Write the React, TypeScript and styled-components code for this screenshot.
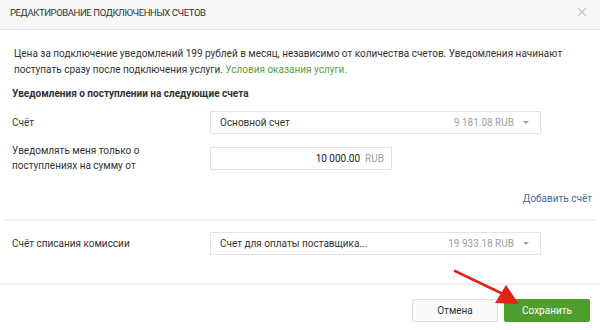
import styled, { createGlobalStyle } from 'styled-components';

const GlobalStyle = createGlobalStyle`
  html, body {
    margin: 0;
    padding: 0;
    background: #ffffff;
  }

  body {
    font-family: Roboto, 'Liberation Sans', Arial, sans-serif;
    font-size: 10px;
    color: #333333;
  }
`;

function Arrow() {
  return (
    <StyledArrow width='80' height='45' viewBox='0 0 80 45'>
      <line x1='6' y1='4' x2='54' y2='27' stroke='#e0241b' strokeWidth='2.5' strokeLinecap='round' />
      <polygon points='70,37 46,36 57,18' fill='#e0241b' />
    </StyledArrow>
  );
}

function Select({ name, amount }: { name: string; amount: string }) {
  return (
    <StyledSelect>
      <span>{name}</span>
      <StyledAmount>
        {amount}
        <StyledCaret />
      </StyledAmount>
    </StyledSelect>
  );
}

function App() {
  return (
    <>
      <GlobalStyle />
      <StyledModal>
        <StyledHeader>
          <StyledTitle>Редактирование подключенных счетов</StyledTitle>
          <StyledClose aria-label='Закрыть'>
            <svg width='10' height='10' viewBox='0 0 10 10'>
              <path d='M1 1 L9 9 M9 1 L1 9' stroke='#c4c4c4' strokeWidth='1.2' />
            </svg>
          </StyledClose>
        </StyledHeader>

        <StyledBody>
          <StyledNote>
            Цена за подключение уведомлений 199 рублей в месяц, независимо от количества счетов. Уведомления начинают
            поступать сразу после подключения услуги.&nbsp;<StyledGreenLink>Условия оказания услуги.</StyledGreenLink>
          </StyledNote>

          <StyledHeading>Уведомления о поступлении на следующие счета</StyledHeading>

          <StyledRow $top={10}>
            <StyledLabel>Счёт</StyledLabel>
            <Select name='Основной счет' amount='9 181.08 RUB' />
          </StyledRow>

          <StyledRow $top={9}>
            <StyledLabel>
              Уведомлять меня только о
              <br />
              поступлениях на сумму от
            </StyledLabel>
            <StyledInput>
              <StyledValue>10 000.00</StyledValue>
              <StyledCurrency>RUB</StyledCurrency>
            </StyledInput>
          </StyledRow>

          <StyledAddLink>Добавить счёт</StyledAddLink>
        </StyledBody>

        <StyledDivider />

        <StyledRow $top={11} $left={12}>
          <StyledLabel>Счёт списания комиссии</StyledLabel>
          <Select name='Счет для оплаты поставщика...' amount='19 933.18 RUB' />
        </StyledRow>

        <StyledFooter>
          <StyledButton>Отмена</StyledButton>
          <StyledButton $primary>Сохранить</StyledButton>
          <Arrow />
        </StyledFooter>
      </StyledModal>
    </>
  );
}

export default App;

const StyledModal = styled.div`
  width: 600px;
  height: 330px;
  overflow: hidden;
  background: #ffffff;
`;

const StyledHeader = styled.div`
  align-items: center;
  background: #f7f7f7;
  border-bottom: 1px solid #e6e6e6;
  box-sizing: border-box;
  display: flex;
  height: 30px;
  justify-content: space-between;
  padding: 0 10px 5px 10px;
`;

const StyledTitle = styled.h1`
  color: #333333;
  font-size: 9.5px;
  font-weight: 400;
  letter-spacing: -0.4px;
  margin: 0;
  text-transform: uppercase;
`;

const StyledClose = styled.button`
  background: none;
  border: none;
  cursor: pointer;
  display: flex;
  margin-right: 3px;
  padding: 0;
`;

const StyledBody = styled.div`
  padding: 16px 8px 0 12px;
`;

const StyledNote = styled.p`
  line-height: 16px;
  margin: 0;
  padding-left: 2px;
`;

const StyledGreenLink = styled.a`
  color: #5aa23a;
  cursor: pointer;
`;

const StyledHeading = styled.h2`
  font-size: 10px;
  font-weight: 700;
  line-height: 14px;
  margin: 9px 0 0 0;
`;

const StyledRow = styled.div<{ $top: number; $left?: number }>`
  align-items: center;
  display: flex;
  margin-top: ${(p) => p.$top}px;
  padding-left: ${(p) => p.$left ?? 0}px;
`;

const StyledLabel = styled.div`
  line-height: 15px;
  width: 198px;
`;

const StyledSelect = styled.div`
  align-items: center;
  border: 1px solid #e3e3e3;
  box-sizing: border-box;
  display: flex;
  height: 23px;
  justify-content: space-between;
  padding: 0 11px 0 9px;
  width: 331px;
`;

const StyledAmount = styled.span`
  align-items: center;
  color: #a0a0a0;
  display: flex;
  gap: 9px;
`;

const StyledCaret = styled.span`
  border-left: 3px solid transparent;
  border-right: 3px solid transparent;
  border-top: 3px solid #a0a0a0;
  display: inline-block;
  height: 0;
  width: 0;
`;

const StyledInput = styled.div`
  align-items: center;
  border: 1px solid #e3e3e3;
  box-sizing: border-box;
  display: flex;
  gap: 5px;
  height: 23px;
  justify-content: flex-end;
  padding: 0 7px;
  width: 182px;
`;

const StyledValue = styled.span`
  color: #222222;
`;

const StyledCurrency = styled.span`
  color: #a0a0a0;
`;

const StyledAddLink = styled.a`
  color: #3f6c9f;
  cursor: pointer;
  display: block;
  line-height: 13px;
  margin-top: 19px;
  text-align: right;
`;

const StyledDivider = styled.hr`
  border: none;
  border-top: 2px solid #f0f0f0;
  margin: 14px 5px 0 5px;
`;

const StyledFooter = styled.div`
  border-top: 2px solid #eeeeee;
  display: flex;
  gap: 6px;
  justify-content: flex-end;
  margin-top: 28px;
  padding: 14px 10px 0 0;
  position: relative;
`;

const StyledButton = styled.button<{ $primary?: boolean }>`
  background: ${(p) => (p.$primary ? '#4f9e2d' : '#fafafa')};
  border: 1px solid ${(p) => (p.$primary ? '#4f9e2d' : '#dddddd')};
  border-radius: 2px;
  color: ${(p) => (p.$primary ? '#ffffff' : '#333333')};
  cursor: pointer;
  font-family: inherit;
  font-size: 10px;
  height: 23px;
  padding: 0;
  width: 86px;
`;

const StyledArrow = styled.svg`
  left: 449px;
  position: absolute;
  top: -18px;
`;
